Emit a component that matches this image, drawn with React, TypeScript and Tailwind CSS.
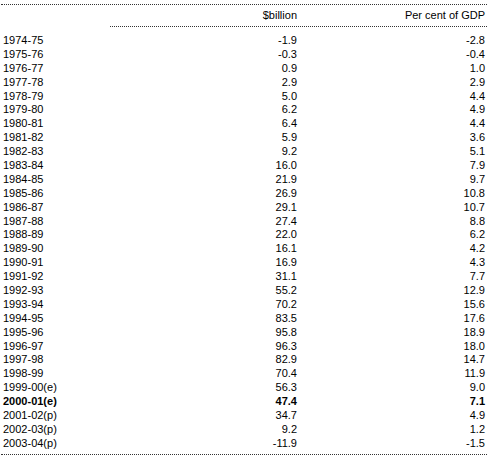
const rows: [string, string, string, boolean?][] = [
  ["1974-75", "-1.9", "-2.8"],
  ["1975-76", "-0.3", "-0.4"],
  ["1976-77", "0.9", "1.0"],
  ["1977-78", "2.9", "2.9"],
  ["1978-79", "5.0", "4.4"],
  ["1979-80", "6.2", "4.9"],
  ["1980-81", "6.4", "4.4"],
  ["1981-82", "5.9", "3.6"],
  ["1982-83", "9.2", "5.1"],
  ["1983-84", "16.0", "7.9"],
  ["1984-85", "21.9", "9.7"],
  ["1985-86", "26.9", "10.8"],
  ["1986-87", "29.1", "10.7"],
  ["1987-88", "27.4", "8.8"],
  ["1988-89", "22.0", "6.2"],
  ["1989-90", "16.1", "4.2"],
  ["1990-91", "16.9", "4.3"],
  ["1991-92", "31.1", "7.7"],
  ["1992-93", "55.2", "12.9"],
  ["1993-94", "70.2", "15.6"],
  ["1994-95", "83.5", "17.6"],
  ["1995-96", "95.8", "18.9"],
  ["1996-97", "96.3", "18.0"],
  ["1997-98", "82.9", "14.7"],
  ["1998-99", "70.4", "11.9"],
  ["1999-00(e)", "56.3", "9.0"],
  ["2000-01(e)", "47.4", "7.1", true],
  ["2001-02(p)", "34.7", "4.9"],
  ["2002-03(p)", "9.2", "1.2"],
  ["2003-04(p)", "-11.9", "-1.5"],
];

export default function App() {
  return (
    <div className="w-[489px] h-[459px] bg-white pt-[4px] pl-[1px] font-['Liberation_Sans',Arial,sans-serif] text-[11px] text-black">
      <div className="w-[486px] border-t border-dotted border-[#333]">
        {/* header */}
        <div className="grid grid-cols-[110px_190px_186px] h-[21px] items-center">
          <div />
          <div className="text-right pr-[4px]">$billion</div>
          <div className="text-right pr-[2px]">Per cent of GDP</div>
        </div>
        <div className="ml-[109px] border-t border-dotted border-[#333]" />

        {/* body */}
        <div className="pt-[7px]">
          {rows.map(([year, bn, pct, bold]) => (
            <div
              key={year}
              className={`grid grid-cols-[110px_190px_186px] h-[13.9px] items-center leading-[13.9px] ${bold ? "font-bold" : ""}`}
            >
              <div className="pl-[2px]">{year}</div>
              <div className="text-right pr-[4px]">{bn}</div>
              <div className="text-right pr-[2px]">{pct}</div>
            </div>
          ))}
        </div>
        <div className="mt-[3px] border-t border-dotted border-[#333]" />
      </div>
    </div>
  );
}
